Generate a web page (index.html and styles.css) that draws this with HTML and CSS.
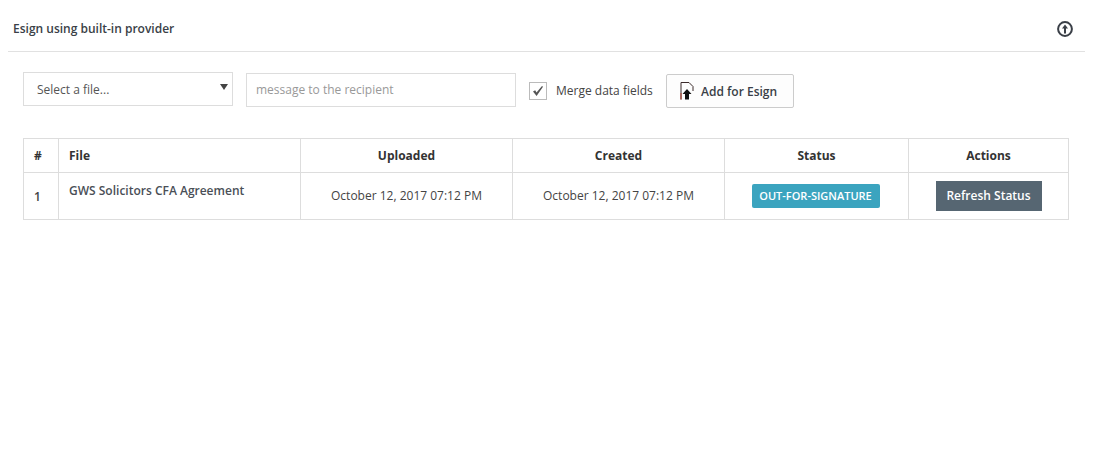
FILE: index.html
```html
<!DOCTYPE html>
<html lang="en">
<head>
<meta charset="utf-8">
<title>Esign</title>
<link rel="stylesheet" href="styles.css">
</head>
<body>
<div class="panel">
  <header class="panel-head">
    <span class="panel-title">Esign using built-in provider</span>
    <svg class="collapse-icon" width="16" height="16" viewBox="0 0 16 16" aria-hidden="true">
      <circle cx="8" cy="8" r="6.9" fill="none" stroke="#3a3f47" stroke-width="2"/>
      <path d="M8 3.4 11 7.4H9V12.4H7V7.4H5Z" fill="#3a3f47"/>
    </svg>
  </header>
  <form class="toolbar">
    <div class="select-box"><span>Select a file...</span><span class="caret"></span></div>
    <div class="text-box">message to the recipient</div>
    <span class="check"><svg width="12" height="12" viewBox="0 0 12 12" aria-hidden="true"><path d="M1 6.500 3.200 5.200 4.500 7.500 10 1 11 1.800 4.600 11Z" fill="#555"/></svg></span>
    <span class="check-label">Merge data fields</span>
    <div class="add-btn">
      <svg width="14" height="18" viewBox="0 0 14 18" aria-hidden="true">
        <path d="M1 17.500V.5H9L13 4.500V9" fill="none" stroke="#3b2a2a" stroke-width="1"/>
        <path d="M1 17.500V11" stroke="#b5432f" stroke-width="1"/>
        <path d="M7 7 11.500 12H9V17.500H5V12H2.500Z" fill="#111"/>
      </svg>
      <span>Add for Esign</span>
    </div>
  </form>
  <table class="grid">
    <thead>
      <tr>
        <th class="c-num">#</th>
        <th class="c-file">File</th>
        <th class="c-date">Uploaded</th>
        <th class="c-date">Created</th>
        <th class="c-status">Status</th>
        <th>Actions</th>
      </tr>
    </thead>
    <tbody>
      <tr>
        <td class="c-num num">1</td>
        <td class="c-file file">GWS Solicitors CFA Agreement</td>
        <td><span class="cell-up">October 12, 2017 07:12 PM</span></td>
        <td><span class="cell-up">October 12, 2017 07:12 PM</span></td>
        <td><span class="label">OUT-FOR-SIGNATURE</span></td>
        <td><span class="refresh">Refresh Status</span></td>
      </tr>
    </tbody>
  </table>
</div>
</body>
</html>
```
FILE: styles.css
```css
* { box-sizing: border-box; }
html, body { margin: 0; background: #fff; }
body {
  font-family: "Open Sans", "Liberation Sans", sans-serif;
  font-size: 12px;
  color: #333;
  height: 454px;
  overflow: hidden;
}
.panel { width: 1085px; }
.panel-head {
  height: 52px;
  margin-left: 8px;
  border-bottom: 1px solid #e1e1e1;
  display: flex;
  align-items: center;
  justify-content: space-between;
  padding: 6px 12px 0 5px;
}
.panel-title { font-size: 12px; font-weight: 600; color: #3a3f47; }
.collapse-icon { display: block; }
.toolbar {
  display: flex;
  align-items: flex-start;
  padding: 20px 0 0 23px;
  height: 86px;
}
.select-box {
  width: 210px;
  height: 34px;
  border: 1px solid #ddd;
  display: flex;
  align-items: center;
  justify-content: space-between;
  padding: 0 4px 0 13px;
  color: #555;
}
.caret {
  width: 0;
  height: 0;
  border-left: 4px solid transparent;
  border-right: 4px solid transparent;
  border-top: 6px solid #444;
  margin-top: -4px;
}
.text-box {
  width: 270px;
  height: 34px;
  margin: 1px 0 0 13px;
  border: 1px solid #ddd;
  padding: 0 9px;
  line-height: 32px;
  color: #999;
}
.check {
  width: 18px;
  height: 18px;
  margin: 10px 0 0 13px;
  border: 1px solid #bbb;
  display: flex;
  align-items: center;
  justify-content: center;
}
.check-label { margin: 11px 0 0 9px; width: 110px; line-height: 16px; color: #444; }
.add-btn {
  width: 128px;
  height: 34px;
  margin-top: 2px;
  border: 1px solid #ccc;
  border-radius: 2px;
  background: #fdfdfd;
  display: flex;
  align-items: center;
  gap: 7px;
  padding-left: 13px;
  color: #3a3f47;
  font-weight: 600;
}
.grid {
  margin-left: 23px;
  width: 1046px;
  table-layout: fixed;
  border-collapse: collapse;
  border: 1px solid #ddd;
}
.grid th, .grid td {
  border: 1px solid #ddd;
  text-align: center;
  vertical-align: middle;
  padding: 0 8px;
}
.grid th { height: 34px; font-weight: 700; color: #333; }
.grid td { height: 47px; color: #444; }
.c-num { width: 35px; }
.c-file { width: 242px; }
.c-date { width: 212px; }
.c-status { width: 184px; }
.grid th.c-num, .grid td.c-num { text-align: left; padding-left: 10px; }
.grid th.c-file, .grid td.c-file { text-align: left; padding-left: 10px; }
.grid td.file { vertical-align: top; padding-top: 9px; font-weight: 600; color: #4a4f57; }
.grid td.num { font-weight: 600; }
.cell-up { display: block; margin-top: -1px; }
.label {
  display: inline-block;
  background: #3ba4bf;
  color: #fff;
  font-size: 11px;
  font-weight: 600;
  line-height: 24px;
  height: 24px;
  width: 128px;
  margin-right: 2px;
  text-align: center;
  border-radius: 2px;
}
.refresh {
  display: inline-block;
  background: #566672;
  color: #fff;
  font-weight: 600;
  line-height: 30px;
  height: 30px;
  width: 106px;
  text-align: center;
}
```
